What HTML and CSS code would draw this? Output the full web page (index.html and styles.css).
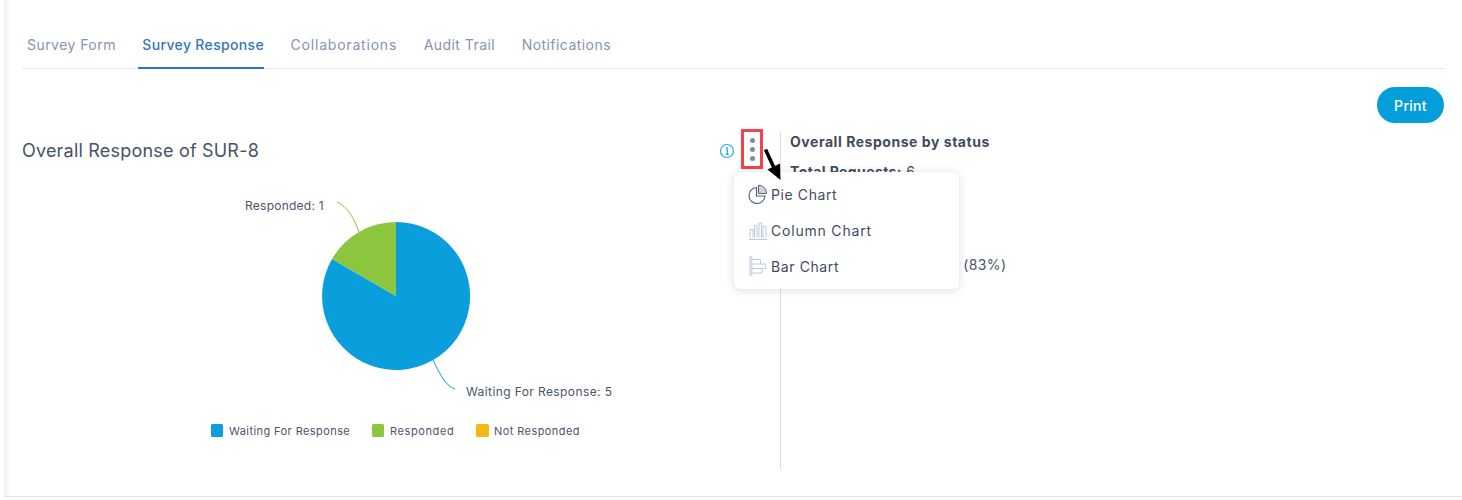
FILE: index.html
```html
<!DOCTYPE html>
<html lang="en">
<head>
<meta charset="utf-8">
<title>Survey Response</title>
<link rel="stylesheet" href="styles.css">
</head>
<body>
<div class="page">
  <nav class="tabs">
    <a class="tab">Survey Form</a>
    <a class="tab active">Survey Response</a>
    <a class="tab wide">Collaborations</a>
    <a class="tab">Audit Trail</a>
    <a class="tab">Notifications</a>
  </nav>
  <div class="toolbar"><button class="print">Print</button></div>
  <div class="content">
    <section class="chart-col">
      <header class="chart-head">
        <h2 class="chart-title">Overall Response of SUR-8</h2>
        <svg class="info" width="16" height="16" viewBox="0 0 16 16"><circle cx="8" cy="8" r="6.5" fill="none" stroke="#2aa8df" stroke-width="1.2"/><circle cx="8" cy="4.9" r="1" fill="#2aa8df"/><path d="M6.8 7h1.6v4.2M6.6 11.3h3.2" fill="none" stroke="#2aa8df" stroke-width="1.2"/></svg>
        <button class="kebab"><i></i><i></i><i></i></button>
      </header>
      <svg class="chart" width="758" height="301" viewBox="22 169 758 301">
        <path d="M396 296L332 259A74 74 0 1 0 396 222Z" fill="#0a9fdc"/>
        <path d="M396 296L396 222A74 74 0 0 0 332 259Z" fill="#8cc63f"/>
        <path d="M359 232C354 218 347 206 337 202" fill="none" stroke="#8cc63f"/>
        <path d="M433 360C439 372 445 386 455 389" fill="none" stroke="#0a9fdc"/>
        <text class="lbl" x="245" y="210">Responded: 1</text>
        <text class="lbl lbl-wide" x="466" y="396">Waiting For Response: 5</text>
        <rect x="211" y="424" width="12" height="13" rx="1.5" fill="#0a9fdc"/>
        <text class="leg" x="229" y="435">Waiting For Response</text>
        <rect x="372" y="424" width="12" height="13" rx="1.5" fill="#8cc63f"/>
        <text class="leg leg-wide" x="390" y="435">Responded</text>
        <rect x="476" y="424" width="13" height="13" rx="1.5" fill="#f6b914"/>
        <text class="leg" x="494" y="435">Not Responded</text>
      </svg>
    </section>
    <aside class="status">
      <h3 class="status-title">Overall Response by status</h3>
      <p class="total"><b>Total Requests:</b> 6</p>
      <p class="share">5 (83%)</p>
    </aside>
  </div>

  <div class="highlight"></div>
  <svg class="pointer" width="24" height="36" viewBox="0 0 24 36"><path d="M3.5 1.5L13 22" stroke="#000" stroke-width="3.6" fill="none"/><path d="M5.5 21.5L18 15.5L18.500 32Z" fill="#000"/></svg>

  <ul class="menu">
    <li class="menu-item">
      <svg class="mi" width="20" height="20" viewBox="0 0 20 20"><path d="M8.500 3.500A8 8 0 1 0 17 12H8.500Z" fill="#fff" stroke="#566376" stroke-width="1.2"/><path d="M10.500 1.200A8 8 0 0 1 18.500 9.500H10.500Z" fill="#cfd4dc" stroke="#566376" stroke-width="1"/></svg>
      <span>Pie Chart</span>
    </li>
    <li class="menu-item wide">
      <svg class="mi" width="20" height="20" viewBox="0 0 20 20"><path d="M1 19.500H19" stroke="#b9cbe0" stroke-width="1.200"/><path d="M2 17.500V9.500H5V17.500M6.500 17.500V5.500H9V17.500M11 17.500V3H13.500V17.500M15 17.500V6.500H18V17.500" fill="none" stroke="#b9cbe0" stroke-width="1"/></svg>
      <span>Column Chart</span>
    </li>
    <li class="menu-item">
      <svg class="mi" width="20" height="20" viewBox="0 0 20 20"><path d="M2 0V20M3.800 0V20" stroke="#b9cbe0" stroke-width="1"/><path d="M4 3.500H12.500V8H4M12.500 8H17.500V12.500H4M4 12.500H14V17H4" fill="none" stroke="#b9cbe0" stroke-width="1"/></svg>
      <span>Bar Chart</span>
    </li>
  </ul>
</div>
</body>
</html>
```
FILE: styles.css
```css
* { box-sizing: border-box; }
html, body { margin: 0; padding: 0; background: #fff; overflow: hidden; }
body { font-family: Inter, "Noto Sans", sans-serif; color: #3f4c60; }
.page {
  position: relative;
  margin-left: 4px;
  height: 497px;
  padding: 0 18px;
  border-bottom: 1px solid #dfe3ee;
  background: linear-gradient(90deg, #f1f1f1, #fff 8px);
}
.tabs {
  display: flex;
  height: 69px;
  padding: 24px 0 0 1px;
  gap: 22.5px;
  border-bottom: 1px solid #dfe6f0;
}
.tab {
  display: block;
  height: 45px;
  padding: 0 0 0 4px;
  font-size: 14px;
  line-height: 42px;
  letter-spacing: .45px;
  color: #8496ad;
}
.tab.wide { letter-spacing: .8px; }
.tab.active {
  color: #2f77bd;
  font-weight: 500;
  letter-spacing: .34px;
  border-bottom: 2px solid #2f77bd;
}
.toolbar {
  display: flex;
  justify-content: flex-end;
  padding-top: 18px;
  height: 62px;
}
.print {
  width: 67px;
  height: 36px;
  border: 0;
  border-radius: 18px;
  background: #049fdb;
  color: #fff;
  font: 500 14px Inter, sans-serif;
  letter-spacing: .3px;
}
.content { display: flex; height: 339px; }
.chart-col { width: 758px; flex: none; }
.chart-head {
  display: flex;
  align-items: center;
  height: 38px;
  padding-right: 17px;
}
.chart-title {
  flex: 1;
  margin: 0;
  font-size: 18px;
  font-weight: 400;
  letter-spacing: .2px;
  color: #475467;
}
.info { margin: 2px 7px 0 0; }
.kebab {
  display: flex;
  flex-direction: column;
  align-items: center;
  gap: 4px;
  width: 21px;
  height: 23px;
  padding: 0;
  margin-bottom: 2px;
  border: 0;
  background: none;
}
.kebab i { width: 5px; height: 5px; border-radius: 50%; background: #7d8ca3; }
.chart { display: block; }
.lbl { font-size: 12px; fill: #4a5668; letter-spacing: .25px; }
.lbl-wide { letter-spacing: .4px; }
.leg { font-size: 11px; fill: #4a5668; letter-spacing: .42px; }
.leg-wide { letter-spacing: .6px; }
.status {
  flex: 1;
  border-left: 1px solid #d9dfe9;
  padding-left: 9px;
  font-size: 14px;
}
.status-title {
  margin: 0;
  font-size: 14px;
  line-height: 22px;
  font-weight: 700;
  letter-spacing: .54px;
  color: #3f4c60;
}
.total { margin: 8px 0 0; line-height: 22px; letter-spacing: .4px; }
.share {
  margin: 71px 0 0;
  padding-left: 160px;
  line-height: 22px;
  letter-spacing: .4px;
  color: #4a5668;
}
.highlight {
  position: absolute;
  left: 737px;
  top: 129px;
  width: 22px;
  height: 40px;
  border: 3px solid #f4414a;
}
.pointer { position: absolute; left: 758px; top: 148px; z-index: 2; }
.menu {
  position: absolute;
  left: 730px;
  top: 172px;
  z-index: 1;
  width: 225px;
  height: 117px;
  margin: 0;
  padding: 4px 0 6px;
  list-style: none;
  background: #fff;
  border-radius: 6px;
  box-shadow: 0 1px 10px rgba(40, 50, 70, .16);
}
.menu-item {
  display: flex;
  align-items: center;
  gap: 3px;
  height: 36px;
  padding-left: 14px;
  font-size: 14px;
  letter-spacing: .6px;
  color: #3f4c60;
}
.menu-item.wide { letter-spacing: .8px; }
.mi { flex: none; }
```
